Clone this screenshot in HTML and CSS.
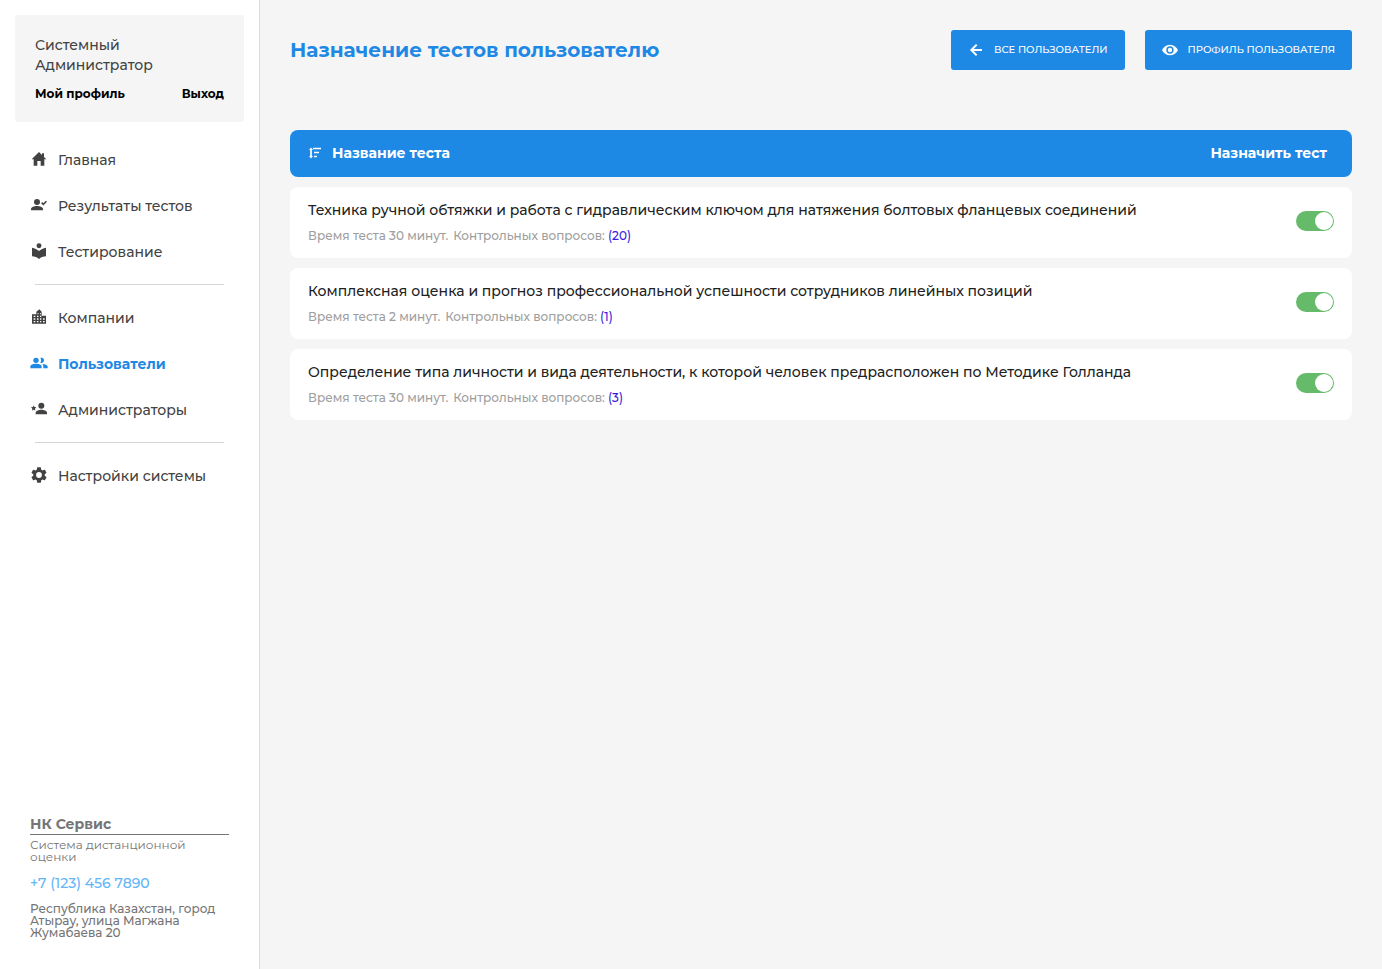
FILE: index.html
```html
<!DOCTYPE html>
<html lang="ru">

<head>
    <meta charset="UTF-8">
    <meta name="viewport" content="width=device-width, initial-scale=1.0">
    <title>Назначение тестов пользователю</title>
    <link rel="stylesheet" href="styles.css">
</head>

<body>
    <aside class="sidebar">
        <div class="profile">
            <div class="profile-name">Системный Администратор</div>
            <div class="profile-links">
                <a href="#">Мой профиль</a>
                <a href="#">Выход</a>
            </div>
        </div>

        <nav class="menu">
            <a href="#" class="menu-item">
                <svg class="icon" viewBox="0 0 24 24"><path d="M12 1.500 1 12.500h3V22h5.500v-7h5v7H20v-9.500h3l-3.500-3.500V3.500h-3V6z"/></svg>
                <span>Главная</span>
            </a>
            <a href="#" class="menu-item">
                <svg class="icon" viewBox="0 0 24 24"><circle cx="9" cy="7.500" r="4.500"/><path d="M0 20v-2c0-3 5-4.500 9-4.500s9 1.500 9 4.500v2z"/><path d="m22.300 5.500 1.700 1.700-5.500 5.500-3.400-3.400 1.700-1.700 1.700 1.700z"/></svg>
                <span>Результаты тестов</span>
            </a>
            <a href="#" class="menu-item">
                <svg class="icon" viewBox="0 0 24 24"><circle cx="12" cy="4" r="3.700"/><path d="M12 12C9.200 9.500 5.500 8 1.500 7v13c4 0 7.700 1.500 10.500 4 2.800-2.500 6.500-4 10.500-4V7c-4 1-7.700 2.500-10.500 5z"/></svg>
                <span>Тестирование</span>
            </a>
            <hr>
            <a href="#" class="menu-item">
                <svg class="icon" viewBox="0 0 24 24"><path fill-rule="evenodd" d="M16 10V4l-3.500-3.500L8 4v4H1.500v14h21V10zM6.500 20H4v-2h2.500zm0-4H4v-2h2.500zm0-4H4v-2h2.500zm4.700 8H9v-2h2.200zm0-4H9v-2h2.200zm0-4H9v-2h2.200zm0-4H9.800V6h1.400zm4.300 12h-2v-2h2zm0-4h-2v-2h2zm0-4h-2v-2h2zm-.8-4h-1.200V6h1.200zM20.500 20H18v-2h2.500zm0-4H18v-2h2.500z"/></svg>
                <span>Компании</span>
            </a>
            <a href="#" class="menu-item active">
                <svg class="icon" viewBox="0 0 24 24"><circle cx="7.500" cy="8" r="4"/><path d="M-1 20v-2.500c0-3 5-4.200 8.500-4.200s8.500 1.200 8.500 4.200V20z"/><path d="M14 4.300a4 4 0 1 1 0 7.400c1.500-2.200 1.500-5.200 0-7.400zM17 13.500c4 .3 8 1.500 8 4V20h-6.500v-2.500c0-1.600-.5-2.900-1.500-4z"/></svg>
                <span>Пользователи</span>
            </a>
            <a href="#" class="menu-item">
                <svg class="icon" viewBox="0 0 24 24"><circle cx="15.500" cy="7" r="4.500"/><path d="M7 20v-2.500c0-3 5-4.500 8.500-4.500s8.500 1.500 8.500 4.500V20z"/><path d="m4 6.500 1.200 2.600 2.800.4-2 2 .5 2.800L4 13l-2.500 1.300.5-2.800-2-2 2.800-.4z"/></svg>
                <span>Администраторы</span>
            </a>
            <hr>
            <a href="#" class="menu-item">
                <svg class="icon" viewBox="2 2 20 20"><path d="M19.140 12.940c.04-.3.060-.61.060-.94s-.02-.64-.07-.94l2.030-1.580a.49.49 0 0 0 .12-.61l-1.920-3.320a.49.49 0 0 0-.59-.22l-2.390.96c-.5-.38-1.030-.7-1.620-.94l-.36-2.540a.48.48 0 0 0-.48-.41h-3.840a.47.47 0 0 0-.47.41l-.36 2.540c-.59.24-1.130.57-1.620.94l-2.390-.96a.48.48 0 0 0-.59.22L2.740 8.870a.47.47 0 0 0 .12.610l2.030 1.580c-.05.3-.09.630-.09.940s.02.640.07.940l-2.030 1.580a.49.49 0 0 0-.12.610l1.920 3.320c.12.220.37.290.59.220l2.390-.96c.5.380 1.030.7 1.620.94l.36 2.540c.05.240.24.410.48.410h3.840c.24 0 .44-.17.470-.41l.36-2.540c.59-.24 1.130-.56 1.620-.94l2.390.96c.22.080.47 0 .59-.22l1.920-3.320a.47.47 0 0 0-.12-.61zM12 15.600a3.600 3.600 0 1 1 0-7.200 3.600 3.600 0 0 1 0 7.200z"/></svg>
                <span>Настройки системы</span>
            </a>
        </nav>

        <footer class="company">
            <div class="company-name">НК Сервис</div>
            <p class="company-about">Система дистанционной оценки</p>
            <a href="tel:+71234567890" class="phone">+7 (123) 456 7890</a>
            <p>Республика Казахстан, город Атырау, улица Магжана Жумабаева 20</p>
        </footer>
    </aside>

    <main class="content">
        <header class="page-header">
            <h1>Назначение тестов пользователю</h1>
            <div class="actions">
                <a href="#" class="btn">
                    <svg class="icon" viewBox="0 0 24 24"><path d="M13 4 5 12l8 8M5 12h16" fill="none" stroke="currentColor" stroke-width="3"/></svg>
                    <span>Все пользователи</span>
                </a>
                <a href="#" class="btn">
                    <svg class="icon" viewBox="0 0 24 24"><path fill-rule="evenodd" d="M12 4C6.500 4 2.200 7.200 0 12c2.200 4.800 6.500 8 12 8s9.800-3.200 12-8c-2.200-4.800-6.500-8-12-8zm0 13.500a5.500 5.500 0 1 1 0-11 5.500 5.500 0 0 1 0 11z"/><circle cx="12" cy="12" r="3.300"/></svg>
                    <span>Профиль пользователя</span>
                </a>
            </div>
        </header>

        <table class="tests">
            <thead>
                <tr>
                    <th>
                        <div class="sort">
                            <svg class="sort-icon" viewBox="0 0 14 14"><path d="M1 4l2-2.500L5 4zM1 10l2 2.500L5 10z"/><path d="M3 3v8M5 2.500h8M6 6.500h5M6 10.500h3" fill="none" stroke="currentColor" stroke-width="1.700"/></svg>
                            <span>Название теста</span>
                        </div>
                    </th>
                    <th class="assign">Назначить тест</th>
                </tr>
            </thead>
            <tbody>
                <tr>
                    <td>
                        <label for="test1" class="test-name">Техника ручной обтяжки и работа с гидравлическим ключом для натяжения болтовых фланцевых соединений</label>
                        <div class="test-info"><span>Время теста 30 минут.</span><span>Контрольных вопросов: <a href="#">(20)</a></span></div>
                    </td>
                    <td class="assign"><input type="checkbox" id="test1" class="switch" checked></td>
                </tr>
                <tr>
                    <td>
                        <label for="test2" class="test-name">Комплексная оценка и прогноз профессиональной успешности сотрудников линейных позиций</label>
                        <div class="test-info"><span>Время теста 2 минут.</span><span>Контрольных вопросов: <a href="#">(1)</a></span></div>
                    </td>
                    <td class="assign"><input type="checkbox" id="test2" class="switch" checked></td>
                </tr>
                <tr>
                    <td>
                        <label for="test3" class="test-name">Определение типа личности и вида деятельности, к которой человек предрасположен по Методике Голланда</label>
                        <div class="test-info"><span>Время теста 30 минут.</span><span>Контрольных вопросов: <a href="#">(3)</a></span></div>
                    </td>
                    <td class="assign"><input type="checkbox" id="test3" class="switch" checked></td>
                </tr>
            </tbody>
        </table>
    </main>
</body>

</html>
```
FILE: styles.css
```css
* {
    box-sizing: border-box;
}

body {
    margin: 0;
    min-height: 100vh;
    display: flex;
    background-color: #f5f5f5;
    font-family: 'Montserrat', 'Inter', sans-serif;
    font-size: 14px;
    font-weight: 500;
    line-height: 20px;
    color: #212121;
}

a {
    text-decoration: none;
}

.icon {
    width: 16px;
    height: 16px;
    flex: none;
    fill: currentColor;
    overflow: visible;
}

/* Sidebar */
.sidebar {
    width: 260px;
    flex: none;
    display: flex;
    flex-direction: column;
    padding: 15px;
    background-color: #fff;
    border-right: 1px solid #dcdcdc;
}

.profile {
    padding: 20px 20px 18px;
    border-radius: 3px;
    background-color: #f5f5f5;
    color: #424242;
}

.profile-name {
    width: 130px;
}

.profile-links {
    display: flex;
    justify-content: space-between;
    margin-top: 9px;
    font-size: 12px;
    font-weight: 700;
}

.profile-links a {
    color: #000;
}

.menu {
    padding: 15px 15px 0;
}

.menu-item {
    display: flex;
    align-items: center;
    gap: 11px;
    height: 46px;
    padding-left: 1px;
    color: #424242;
}

.menu-item .icon {
    margin-bottom: 3px;
}

.menu-item.active {
    color: #1e88e5;
    font-weight: 700;
}

.menu hr {
    height: 1px;
    margin: 9px 5px 10px;
    border: none;
    background-color: #d6d6d6;
}

.company {
    margin: auto 15px 0 0;
    padding: 0 0 15px 15px;
    font-size: 12px;
    line-height: 12px;
    color: #757575;
}

.company-name {
    margin-bottom: 4px;
    border-bottom: 1px solid #757575;
    font-size: 14px;
    line-height: 20px;
    font-weight: 700;
}

.company p {
    margin: 0;
}

.company .company-about {
    font-weight: 400;
}

.phone {
    display: block;
    margin: 10px 0;
    font-size: 14px;
    line-height: 20px;
    color: #64b5f6;
}

/* Content */
.content {
    flex: 1;
    padding: 30px;
}

.page-header {
    display: flex;
    justify-content: space-between;
    align-items: center;
    margin-bottom: 50px;
}

h1 {
    margin: 0;
    font-size: 20px;
    font-weight: 700;
    color: #1e88e5;
}

.actions {
    display: flex;
    gap: 20px;
}

.btn {
    display: flex;
    align-items: center;
    gap: 10px;
    height: 40px;
    padding: 0 17px;
    border-radius: 3px;
    background-color: #1e88e5;
    color: #fff;
    font-size: 10px;
    text-transform: uppercase;
}

.tests {
    width: 100%;
    border-collapse: separate;
    border-spacing: 0 10px;
}

.tests th {
    height: 47px;
    padding: 0 18px 2px;
    background-color: #1e88e5;
    color: #fff;
    font-weight: 700;
    text-align: left;
}

.tests td {
    height: 71px;
    padding: 0 18px;
    background-color: #fff;
}

.tests th:first-child,
.tests td:first-child {
    border-radius: 8px 0 0 8px;
}

.tests th:last-child,
.tests td:last-child {
    border-radius: 0 8px 8px 0;
}

.tests th.assign {
    padding-right: 25px;
    text-align: right;
    white-space: nowrap;
}

.tests td.assign {
    padding-bottom: 3px;
}

.sort {
    display: flex;
    align-items: center;
    gap: 10px;
}

.sort-icon {
    width: 14px;
    height: 14px;
    fill: currentColor;
}

.test-name {
    display: block;
    margin-bottom: 6px;
}

.test-info {
    display: flex;
    gap: 5px;
    font-size: 12px;
    color: #9e9e9e;
}

.test-info a {
    color: #3a1fe0;
}

.switch {
    appearance: none;
    display: flex;
    width: 38px;
    height: 20px;
    margin: 0 0 0 auto;
    padding: 1px;
    border-radius: 10px;
    background-color: #bdbdbd;
    cursor: pointer;
}

.switch::before {
    content: "";
    width: 18px;
    height: 18px;
    border-radius: 50%;
    background-color: #fff;
}

.switch:checked {
    justify-content: flex-end;
    background-color: #66bb6a;
}
```
